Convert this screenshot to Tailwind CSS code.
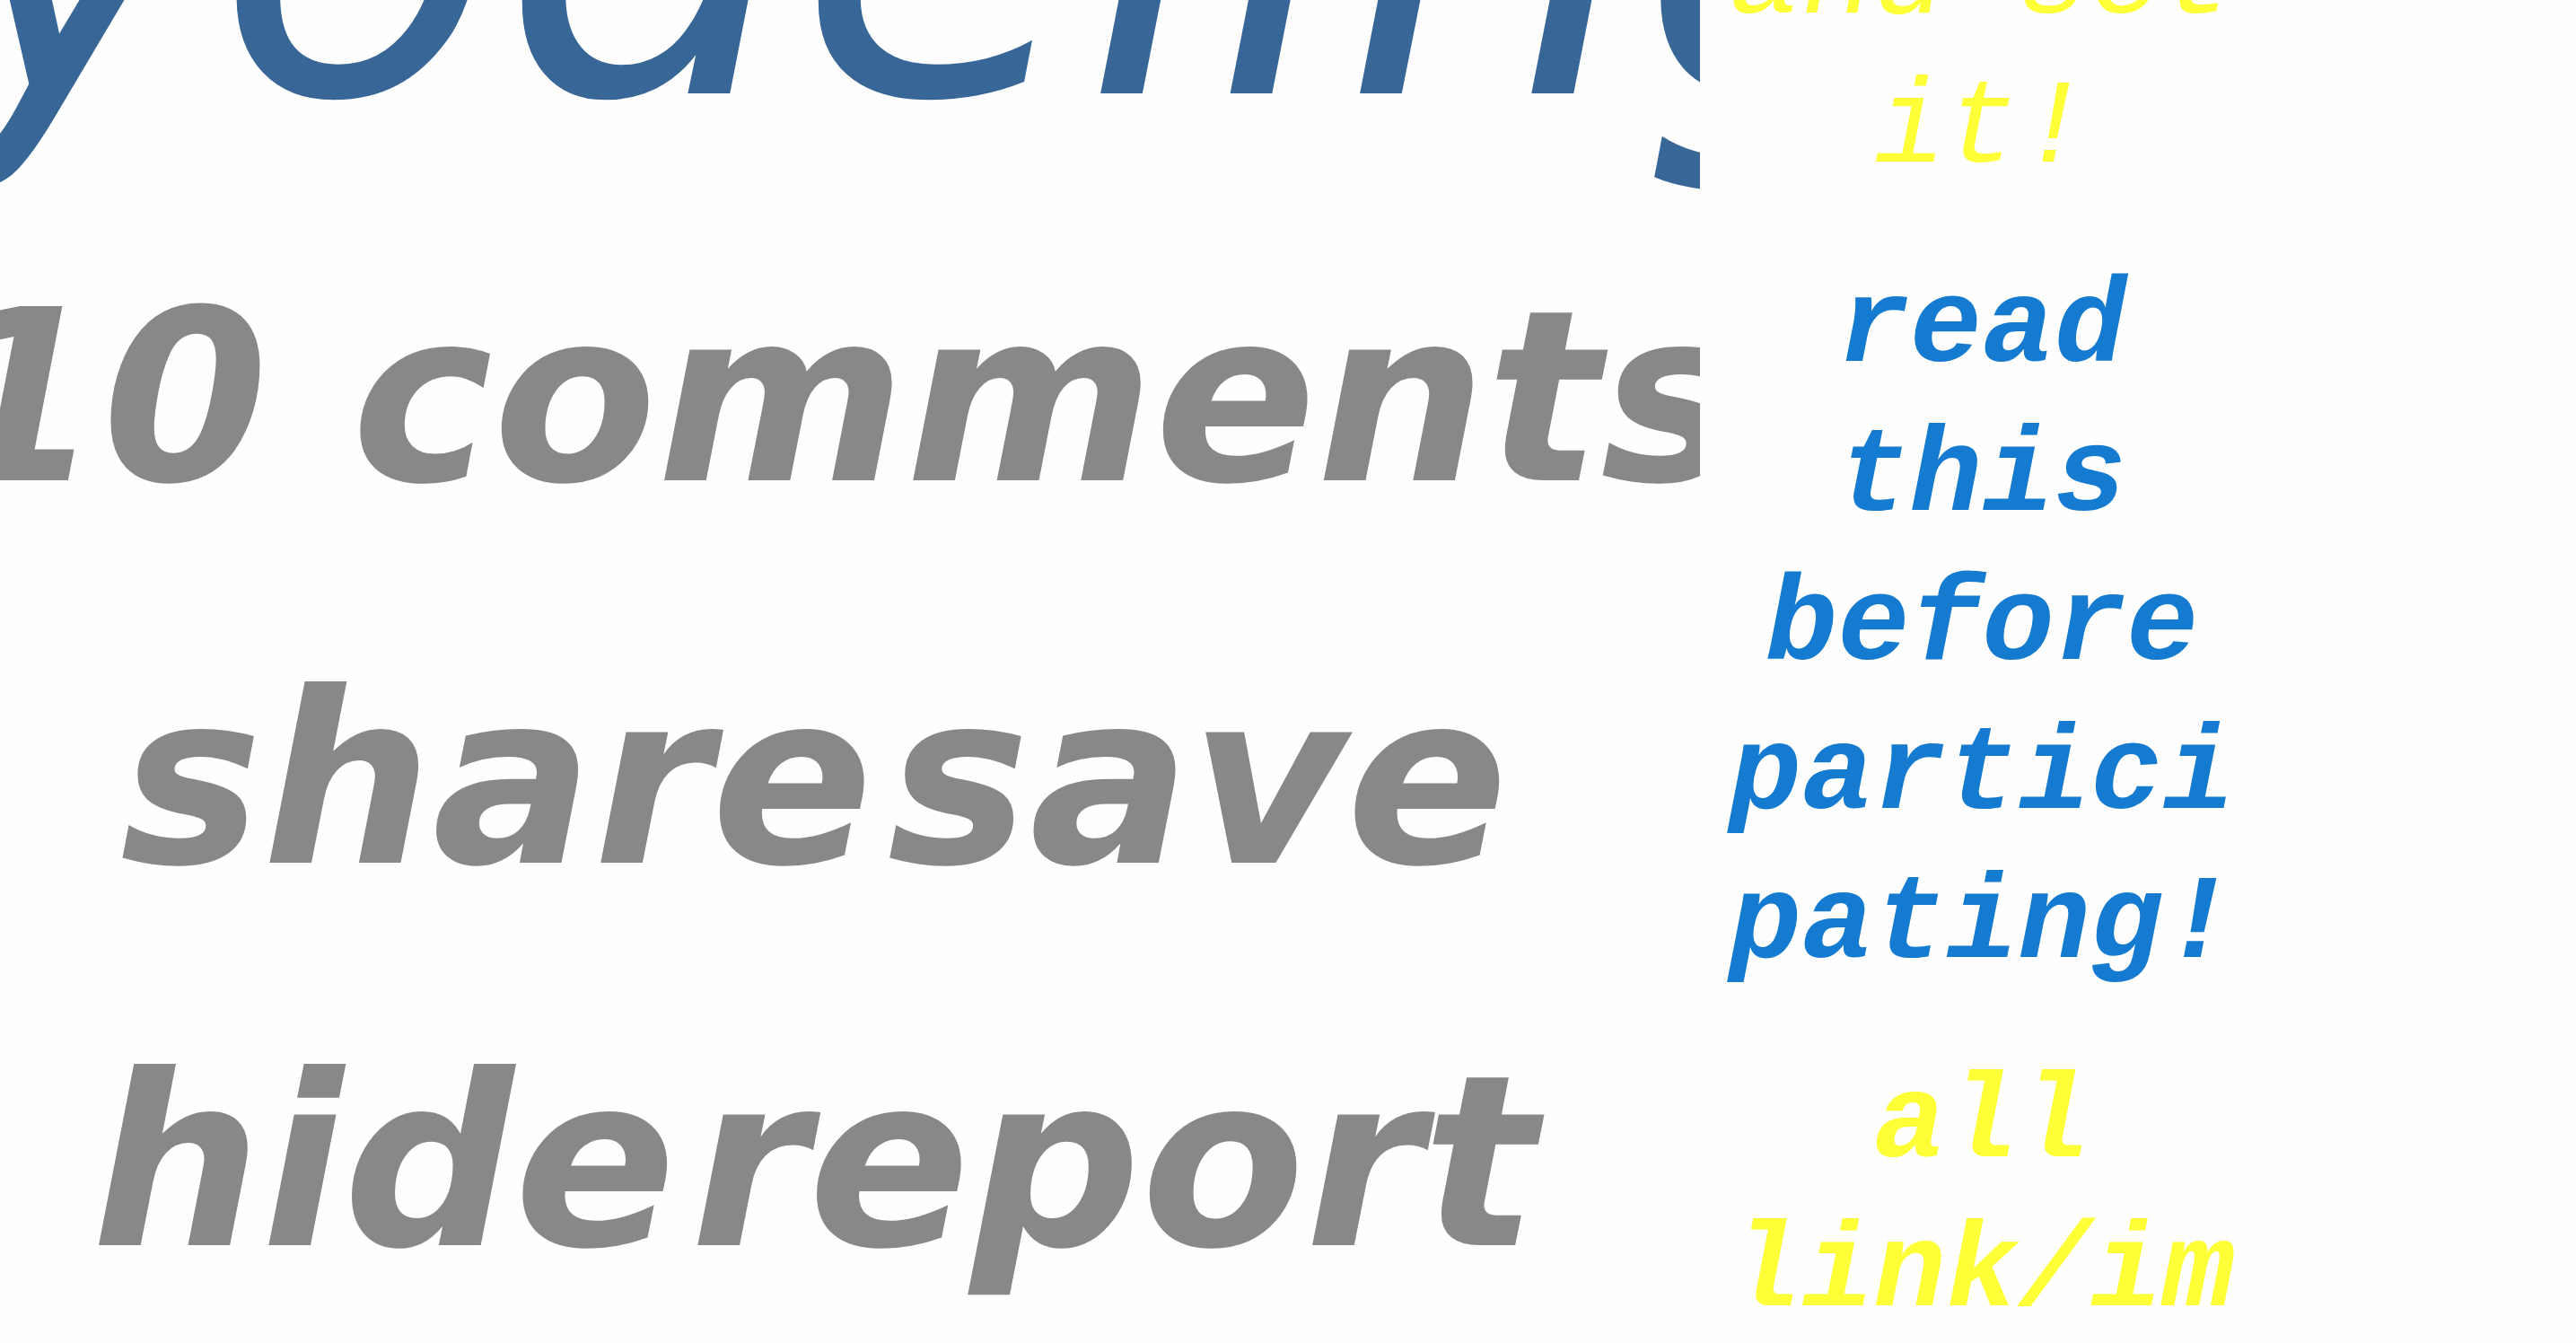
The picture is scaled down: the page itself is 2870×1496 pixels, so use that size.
<!DOCTYPE html>
<html lang="en">
<head>
<meta charset="utf-8">
<title>yodeling</title>
<script src="https://cdn.jsdelivr.net/npm/@tailwindcss/browser@4"></script>
</head>
<body class="flex h-screen items-start overflow-hidden bg-[#fefefe] italic">
<main class="h-full w-[66%] overflow-hidden whitespace-nowrap font-['DejaVu_Sans',Verdana,sans-serif]">
  <h1 class="-ml-17 -mt-[336px] text-[520px] leading-[520px] text-[#386797]"><a href="#">yodeling</a></h1>
  <ul class="mt-[46px] text-[266px] font-bold leading-[426px] text-[#888]">
    <li class="flex justify-center pr-6"><a href="#">10 comments</a></li>
    <li class="flex justify-center gap-4 pr-20"><a href="#">share</a><a href="#">save</a></li>
    <li class="flex justify-center gap-4 pr-20"><a href="#">hide</a><a href="#">report</a></li>
  </ul>
</main>
<aside class="-mt-[105px] ml-7 flex w-[572px] flex-col gap-14 text-center font-['Liberation_Mono','Courier_New',monospace] text-[134px] leading-[166px] text-[#ffff38]">
  <p>and set<br>it!</p>
  <p class="font-bold text-[#147bd1]"><a href="#">read<br>this<br>before<br>partici<br>pating!</a></p>
  <p class="font-bold">all<br>link/im</p>
</aside>
</body>
</html>
